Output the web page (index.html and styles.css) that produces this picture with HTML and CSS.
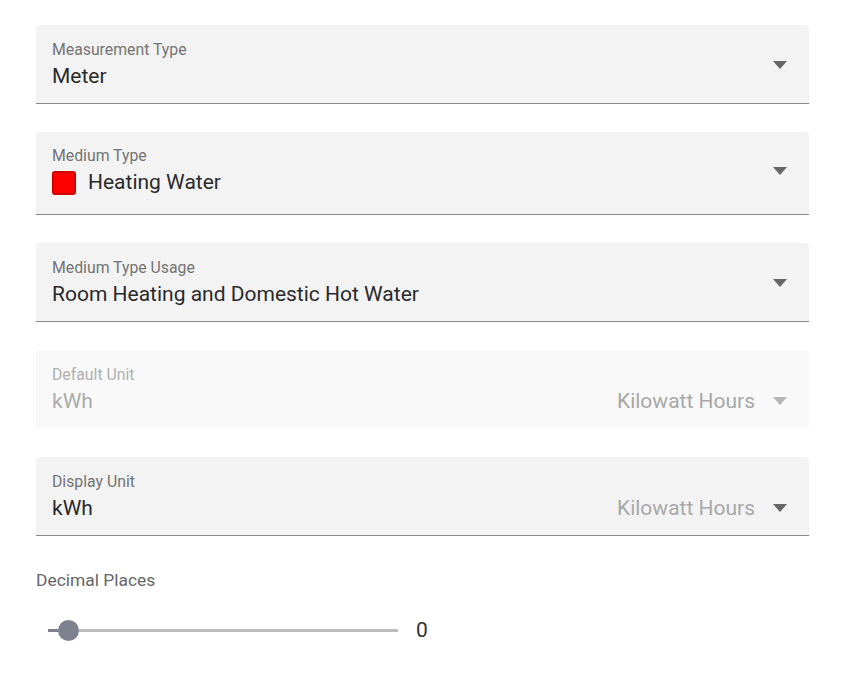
FILE: index.html
```html
<!DOCTYPE html>
<html lang="en">
<head>
	<meta charset="UTF-8">
	<meta name="viewport" content="width=device-width, initial-scale=1.0">
	<title>Meter Settings</title>
	<link rel="stylesheet" href="styles.css">
</head>
<body>
	<div class="container">
		<!-- Measurement type -->
		<div class="field">
			<div class="field-body">
				<div class="field-label">Measurement Type</div>
				<div class="field-value">Meter</div>
			</div>
			<span class="arrow"></span>
		</div>

		<!-- Medium type with colour swatch -->
		<div class="field field-tall">
			<div class="field-body">
				<div class="field-label">Medium Type</div>
				<div class="field-value"><span class="swatch"></span>Heating Water</div>
			</div>
			<span class="arrow"></span>
		</div>

		<div class="field">
			<div class="field-body">
				<div class="field-label">Medium Type Usage</div>
				<div class="field-value">Room Heating and Domestic Hot Water</div>
			</div>
			<span class="arrow"></span>
		</div>

		<div class="field disabled">
			<div class="field-body">
				<div class="field-label">Default Unit</div>
				<div class="field-value">kWh</div>
			</div>
			<span class="suffix">Kilowatt Hours</span>
			<span class="arrow arrow-low"></span>
		</div>

		<div class="field">
			<div class="field-body">
				<div class="field-label">Display Unit</div>
				<div class="field-value">kWh</div>
			</div>
			<span class="suffix">Kilowatt Hours</span>
			<span class="arrow arrow-low"></span>
		</div>

		<!-- Slider -->
		<div class="slider-container">
			<div class="slider-label">Decimal Places</div>
			<div class="slider-row">
				<div class="slider-track">
					<div class="slider-fill"></div>
					<div class="slider-thumb"></div>
				</div>
				<span class="slider-value">0</span>
			</div>
		</div>
	</div>
</body>
</html>
```

FILE: styles.css
```css
body {
	font-family: Roboto, "Liberation Sans", sans-serif;
	margin: 0;
	padding: 0;
	background-color: white;
}
.container {
	padding: 25px 36px 0 36px;
}
.field {
	display: flex;
	align-items: center;
	background-color: #f3f3f3;
	border-radius: 4px 4px 0 0;
	border-bottom: 1px solid #8a8a8a;
	padding: 15px 22px 13px 16px;
	margin-bottom: 28px;
}
.field-tall {
	padding-top: 14px;
	padding-bottom: 18px;
}
.field-body {
	flex: 1;
}
.field-label {
	font-size: 15.8px;
	line-height: 20px;
	color: #747474;
}
.field-value {
	display: flex;
	align-items: center;
	margin-top: 2px;
	font-size: 21px;
	line-height: 28px;
	color: #2a2a2a;
}
.swatch {
	display: inline-block;
	width: 20px;
	height: 20px;
	margin-top: 2px;
	margin-right: 12px;
	background-color: #f00;
	border: 2px solid #d00000;
	border-radius: 3px;
}
.suffix {
	margin-top: 22px;
	margin-right: 18px;
	font-size: 21px;
	line-height: 28px;
	color: #a8a8a8;
}
.arrow {
	width: 0;
	height: 0;
	border-left: 7.5px solid transparent;
	border-right: 7.5px solid transparent;
	border-top: 8px solid #666;
}
.arrow-low {
	margin-top: 22px;
}
.disabled {
	background-color: #f9f9f9;
	border-bottom-color: transparent;
}
.disabled .field-label {
	color: #b0b0b0;
}
.disabled .field-value {
	color: #ababab;
}
.disabled .arrow {
	border-top-color: #b5b5b5;
}
.slider-container {
	padding-top: 5px;
}
.slider-label {
	font-size: 17.4px;
	line-height: 22px;
	color: #666;
}
.slider-row {
	display: flex;
	align-items: center;
	margin-top: 24px;
	padding-left: 12px;
	height: 30px;
}
.slider-track {
	position: relative;
	width: 350px;
	height: 3px;
	background-color: #bcbcbc;
}
.slider-fill {
	width: 20px;
	height: 3px;
	background-color: #7e828f;
}
.slider-thumb {
	position: absolute;
	left: 10px;
	top: -9px;
	width: 21px;
	height: 21px;
	border-radius: 50%;
	background-color: #7e828f;
}
.slider-value {
	margin-left: 18px;
	font-size: 21px;
	color: #333;
}
```
